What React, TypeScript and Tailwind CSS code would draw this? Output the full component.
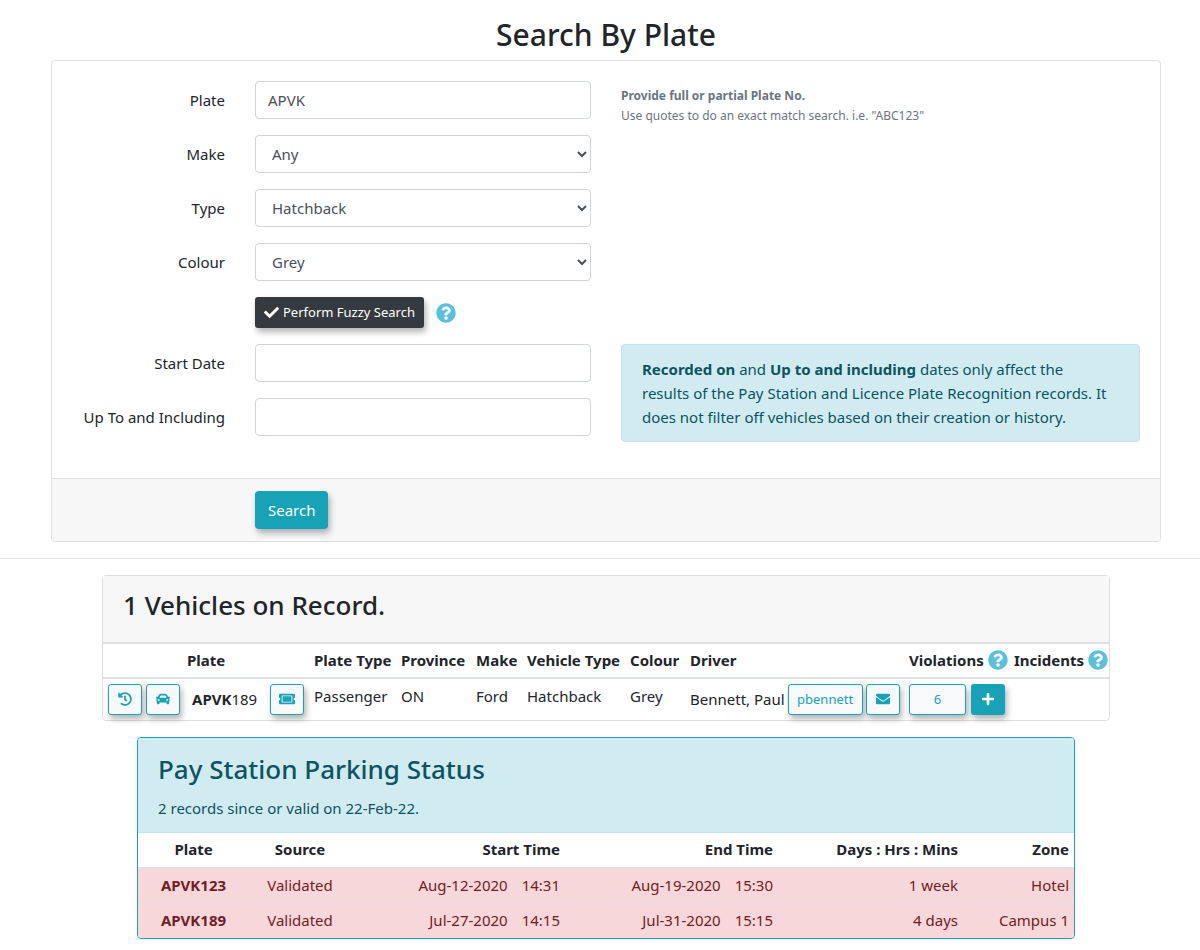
import React, { useState } from 'react';
import {
  FaCar,
  FaCheck,
  FaEnvelope,
  FaHistory,
  FaPlus,
  FaQuestionCircle,
  FaTicketAlt,
} from 'react-icons/fa';

const fieldClass =
  'w-full h-[38px] px-3 rounded border border-[#ced4da] bg-white text-[#495057] text-[15px] leading-6';
const outlineBtn =
  'inline-flex shrink-0 items-center justify-center h-[31px] rounded-[3px] border border-[#17a2b8] bg-[#f8f9fa] text-[#17a2b8] text-[13px] shadow-[2px_4px_6px_rgba(0,0,0,0.3)]';

const selects = [
  { id: 'make', label: 'Make', options: ['Any', 'Ford', 'Honda', 'Toyota'], initial: 'Any' },
  { id: 'type', label: 'Type', options: ['Any', 'Hatchback', 'Sedan', 'Truck'], initial: 'Hatchback' },
  { id: 'colour', label: 'Colour', options: ['Any', 'Black', 'Grey', 'White'], initial: 'Grey' },
];

const parking = [
  { plate: 'APVK123', source: 'Validated', start: ['Aug-12-2020', '14:31'], end: ['Aug-19-2020', '15:30'], length: '1 week', zone: 'Hotel' },
  { plate: 'APVK189', source: 'Validated', start: ['Jul-27-2020', '14:15'], end: ['Jul-31-2020', '15:15'], length: '4 days', zone: 'Campus 1' },
];

function Help({ label }: { label: string }) {
  return (
    <button type="button" aria-label={label} className="shrink-0 text-[#5bc0de]">
      <FaQuestionCircle size={20} />
    </button>
  );
}

function Label({ htmlFor, children }: { htmlFor: string; children: React.ReactNode }) {
  return (
    <label htmlFor={htmlFor} className="col-span-2 px-[15px] pt-[7px] text-right leading-6">
      {children}
    </label>
  );
}

function SearchForm() {
  const [plate, setPlate] = useState('APVK');
  const [fuzzy, setFuzzy] = useState(true);

  return (
    <form
      onSubmit={(e) => e.preventDefault()}
      className="rounded border border-[#dfdfdf] overflow-hidden"
    >
      <div className="p-5">
        <div className="-mx-[15px] grid grid-cols-12 gap-y-4">
          <Label htmlFor="plate">Plate</Label>
          <div className="col-span-4 px-[15px]">
            <input id="plate" value={plate} onChange={(e) => setPlate(e.target.value)} className={fieldClass} />
          </div>
          <div className="col-span-6 px-[15px] pt-[5px] h-[38px] text-[12px] leading-5 text-[#6c757d]">
            <strong className="block">Provide full or partial Plate No.</strong>
            Use quotes to do an exact match search. i.e. "ABC123"
          </div>

          {selects.map((s) => (
            <React.Fragment key={s.id}>
              <Label htmlFor={s.id}>{s.label}</Label>
              <div className="col-span-4 px-[15px]">
                <select id={s.id} defaultValue={s.initial} className={fieldClass}>
                  {s.options.map((o) => (
                    <option key={o}>{o}</option>
                  ))}
                </select>
              </div>
              <div className="col-span-6" />
            </React.Fragment>
          ))}

          <div className="col-span-6 col-start-3 px-[15px] flex items-center gap-3">
            <button
              type="button"
              aria-pressed={fuzzy}
              onClick={() => setFuzzy(!fuzzy)}
              className="flex items-center gap-1 h-[31px] px-[9px] rounded-[3px] bg-[#343a40] text-white text-[13px] shadow-[2px_4px_6px_rgba(0,0,0,0.3)]"
            >
              <FaCheck size={15} className={fuzzy ? '' : 'invisible'} />
              Perform Fuzzy Search
            </button>
            <Help label="About fuzzy search" />
          </div>
        </div>

        {/* Date range, with the note beside both fields */}
        <div className="-mx-[15px] mt-4 grid grid-cols-12 grid-rows-[38px_auto] gap-y-4">
          <Label htmlFor="start">Start Date</Label>
          <div className="col-span-4 px-[15px]">
            <input id="start" className={fieldClass} />
          </div>
          <div className="col-span-6 row-span-2 px-[15px]">
            <div className="mb-4 pl-5 pr-8 py-3 rounded border border-[#bee5eb] bg-[#d1ecf1] text-[#0c5460] leading-6">
              <strong>Recorded on</strong> and <strong>Up to and including</strong> dates only affect the
              results of the Pay Station and Licence Plate Recognition records. It does not filter off
              vehicles based on their creation or history.
            </div>
          </div>
          <Label htmlFor="end">Up To and Including</Label>
          <div className="col-span-4 px-[15px]">
            <input id="end" className={fieldClass} />
          </div>
        </div>
      </div>

      <div className="border-t border-[#dfdfdf] bg-[#f7f7f7] px-5 py-3">
        <div className="-mx-[15px] grid grid-cols-12">
          <div className="col-span-4 col-start-3 px-[15px]">
            <button
              type="submit"
              className="h-[38px] px-[13px] rounded bg-[#17a2b8] text-white shadow-[2px_4px_6px_rgba(0,0,0,0.3)]"
            >
              Search
            </button>
          </div>
        </div>
      </div>
    </form>
  );
}

function Vehicles() {
  return (
    <section className="mx-auto max-w-[1008px] rounded border border-[#dfdfdf]">
      <div className="px-5 pt-3 pb-5 border-b border-[#dfdfdf] bg-[#f7f7f7]">
        <h3 className="text-[26px] leading-[34px] font-medium">1 Vehicles on Record.</h3>
      </div>
      <table className="w-full table-fixed text-left">
        <colgroup>
          <col className="w-[84px]" />
          <col className="w-[122px]" />
          <col className="w-[87px]" />
          <col className="w-[75px]" />
          <col className="w-[51px]" />
          <col className="w-[103px]" />
          <col className="w-[60px]" />
          <col className="w-[219px]" />
          <col className="w-[105px]" />
          <col />
        </colgroup>
        <thead>
          <tr className="h-[34px] border-t border-b-2 border-t-[#dee2e6] border-b-[#dee2e6] whitespace-nowrap">
            <th colSpan={2} className="px-[5px] text-center">Plate</th>
            <th className="px-[5px]">Plate Type</th>
            <th className="px-[5px]">Province</th>
            <th className="px-[5px]">Make</th>
            <th className="px-[5px]">Vehicle Type</th>
            <th className="px-[5px]">Colour</th>
            <th className="px-[5px]">Driver</th>
            <th className="px-[5px]">
              <span className="flex items-center gap-1">Violations <Help label="About violations" /></span>
            </th>
            <th className="pl-[5px]">
              <span className="flex items-center gap-1">Incidents <Help label="About incidents" /></span>
            </th>
          </tr>
        </thead>
        <tbody>
          <tr className="align-top leading-6 whitespace-nowrap">
            <td className="p-[5px]">
              <div className="flex gap-1">
                <button type="button" aria-label="History" className={`${outlineBtn} w-[34px]`}><FaHistory size={14} /></button>
                <button type="button" aria-label="Vehicle" className={`${outlineBtn} w-[34px]`}><FaCar size={14} /></button>
              </div>
            </td>
            <td className="p-[5px]">
              <div className="flex items-center justify-between">
                <span><strong>APVK</strong>189</span>
                <button type="button" aria-label="Ticket" className={`${outlineBtn} w-[34px]`}><FaTicketAlt size={16} /></button>
              </div>
            </td>
            <td className="p-[5px]">Passenger</td>
            <td className="p-[5px]">ON</td>
            <td className="p-[5px]">Ford</td>
            <td className="p-[5px]">Hatchback</td>
            <td className="p-[5px]">Grey</td>
            <td className="p-[5px]">
              <div className="flex items-center gap-[3px]">
                <span>Bennett, Paul</span>
                <a href="#driver" className={`${outlineBtn} w-[75px]`}>pbennett</a>
                <button type="button" aria-label="Email" className={`${outlineBtn} w-[34px]`}><FaEnvelope size={14} /></button>
              </div>
            </td>
            <td colSpan={2} className="p-[5px]">
              <div className="flex gap-[5px]">
                <a href="#violations" className={`${outlineBtn} w-[57px]`}>6</a>
                <button
                  type="button"
                  aria-label="Add violation"
                  className="flex items-center justify-center w-[34px] h-[31px] rounded-[3px] bg-[#17a2b8] text-white shadow-[2px_4px_6px_rgba(0,0,0,0.3)]"
                >
                  <FaPlus size={14} />
                </button>
              </div>
            </td>
          </tr>
        </tbody>
      </table>
    </section>
  );
}

function ParkingStatus() {
  return (
    <section className="mx-auto mt-4 max-w-[938px] rounded border border-[#17a2b8] overflow-hidden">
      <div className="px-5 py-3 border-b border-[#bee5eb] bg-[#d1ecf1] text-[#0c5460]">
        <h3 className="text-[26px] leading-[38px] font-medium">Pay Station Parking Status</h3>
        <p className="mt-2 leading-6">2 records since or valid on 22-Feb-22.</p>
      </div>
      <table className="w-full table-fixed text-right whitespace-nowrap">
        <colgroup>
          <col className="w-[111px]" />
          <col className="w-[102px]" />
          <col className="w-[214px]" />
          <col className="w-[213px]" />
          <col className="w-[185px]" />
          <col />
        </colgroup>
        <thead>
          <tr className="h-[35px] border-b-2 border-[#dee2e6]">
            <th className="px-[5px] text-center">Plate</th>
            <th className="px-[5px] text-center">Source</th>
            <th className="px-[5px]">Start Time</th>
            <th className="px-[5px]">End Time</th>
            <th className="px-[5px]">Days : Hrs : Mins</th>
            <th className="px-[5px]">Zone</th>
          </tr>
        </thead>
        <tbody>
          {parking.map((row) => (
            <tr key={row.plate} className="h-[35px] border-t border-[#dee2e6] bg-[#f8d7da] text-[#721c24]">
              <td className="px-[5px] text-center font-bold">{row.plate}</td>
              <td className="px-[5px] text-center">{row.source}</td>
              <td className="px-[5px]">{row.start[0]}<span className="ml-[14px]">{row.start[1]}</span></td>
              <td className="px-[5px]">{row.end[0]}<span className="ml-[14px]">{row.end[1]}</span></td>
              <td className="px-[5px]">{row.length}</td>
              <td className="px-[5px]">{row.zone}</td>
            </tr>
          ))}
        </tbody>
      </table>
    </section>
  );
}

export default function App() {
  return (
    <div className="min-h-screen overflow-hidden bg-white pb-3 text-[15px] text-[#212529] font-['Noto_Sans','Open_Sans',sans-serif]">
      <div className="pl-3">
        <div className="mx-auto max-w-[1110px]">
          <h2 className="pt-[15px] mb-[5px] text-center text-[30px] leading-[40px] font-medium">Search By Plate</h2>
          <SearchForm />
        </div>
      </div>
      <hr className="my-4 border-[#e5e5e5]" />
      <div className="pl-3">
        <Vehicles />
        <ParkingStatus />
      </div>
    </div>
  );
}
